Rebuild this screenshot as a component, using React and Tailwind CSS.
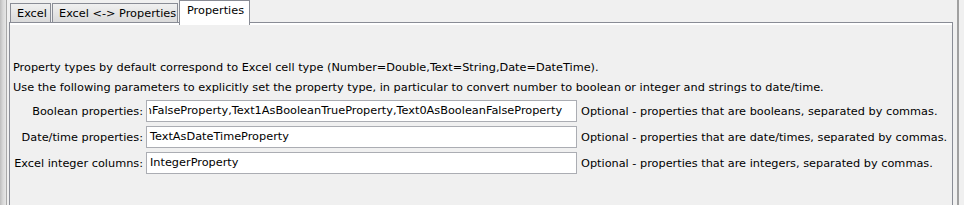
export default function App() {
  const font = "font-['DejaVu_Sans',sans-serif] text-[11.3px] text-black";
  const rows = [
    {
      label: "Boolean properties:",
      value: "FalseProperty,Text1AsBooleanTrueProperty,Text0AsBooleanFalseProperty",
      partial: true,
      desc: "Optional - properties that are booleans, separated by commas.",
    },
    {
      label: "Date/time properties:",
      value: "TextAsDateTimeProperty",
      partial: false,
      desc: "Optional - properties that are date/times, separated by commas.",
    },
    {
      label: "Excel integer columns:",
      value: "IntegerProperty",
      partial: false,
      desc: "Optional - properties that are integers, separated by commas.",
    },
  ];
  return (
    <div className={`w-[964px] h-[205px] bg-[#f0f0f0] flex overflow-hidden ${font}`}>
      <div className="w-[6px] shrink-0 bg-gradient-to-r from-[#bdbdbd] via-[#d9d9d9] to-[#e6e6e6]" />
      <div className="w-px shrink-0 bg-[#a9a9a9]" />
      <div className="w-[2px] shrink-0" />
      <div className="w-[944px] shrink-0 flex flex-col">
        <div className="h-[22px] flex items-end pl-px gap-px">
          <div className="h-[19px] px-[6px] pt-[2px] border border-b-0 border-[#898c95] bg-gradient-to-b from-[#f0f0f0] to-[#dadada] leading-[15px] w-[41px]">
            Excel
          </div>
          <div className="h-[19px] px-[6px] pt-[2px] border border-b-0 border-[#898c95] bg-gradient-to-b from-[#f0f0f0] to-[#dadada] leading-[15px] w-[126px] whitespace-nowrap">
            Excel &lt;-&gt; Properties
          </div>
          <div className="relative z-10 h-[25px] -mb-[3px] px-[7px] pt-[2px] border border-b-0 border-[#898c95] bg-white leading-[15px] w-[71px]">
            Properties
          </div>
        </div>
        <div className="flex-1 border-l border-t border-r border-[#898c95] flex flex-col">
          <div className="h-[2px] bg-white" />
          <div className="pl-[3px] pt-[33px] flex flex-col">
            <div className="h-[20px] leading-[20px] whitespace-nowrap">
              Property types by default correspond to Excel cell type (Number=Double,Text=String,Date=DateTime).
            </div>
            <div className="h-[20px] leading-[20px] whitespace-nowrap">
              Use the following parameters to explicitly set the property type, in particular to convert number to boolean or integer and strings to date/time.
            </div>
            <div className="mt-[2px] flex flex-col gap-[4px]">
              {rows.map((r) => (
                <div key={r.label} className="flex items-center h-[22px]">
                  <div className="w-[130px] shrink-0 text-right whitespace-nowrap pt-[2px]">{r.label}</div>
                  <div className="ml-[3px] w-[431px] h-[22px] shrink-0 border border-[#abadb3] bg-white flex items-center overflow-hidden pl-[2px] pr-[3px] pt-[1px]">
                    {r.partial ? (
                      <span className="w-[3px] shrink-0 overflow-hidden flex justify-end">
                        <span className="shrink-0">n</span>
                      </span>
                    ) : (
                      <span className="w-px shrink-0" />
                    )}
                    <span className="whitespace-nowrap shrink-0">{r.value}</span>
                  </div>
                  <div className="ml-[4px] whitespace-nowrap pt-[2px]">{r.desc}</div>
                </div>
              ))}
            </div>
          </div>
        </div>
      </div>
      <div className="w-[4px] shrink-0" />
      <div className="w-[2px] shrink-0 bg-[#a0a0a0]" />
    </div>
  );
}
